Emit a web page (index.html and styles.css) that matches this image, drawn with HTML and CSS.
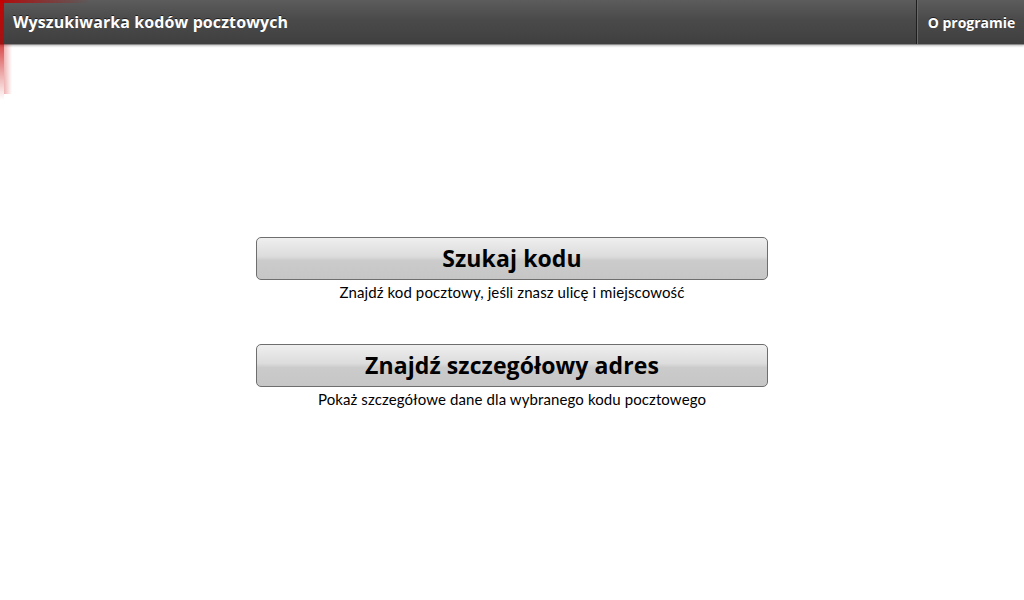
FILE: index.html
```html
<!DOCTYPE html>
<html lang="pl">
<head>
<meta charset="utf-8">
<title>Wyszukiwarka kodów pocztowych</title>
<link rel="stylesheet" href="styles.css">
</head>
<body>
<div class="app">
  <header class="topbar">
    <h1 class="title">Wyszukiwarka kodów pocztowych</h1>
    <button class="about">O programie</button>
  </header>
  <div class="corner-glow"></div>
  <main class="content">
    <div class="choice">
      <button class="big-btn">Szukaj kodu</button>
      <p class="hint">Znajdź kod pocztowy, jeśli znasz ulicę i miejscowość</p>
    </div>
    <div class="choice">
      <button class="big-btn">Znajdź szczegółowy adres</button>
      <p class="hint">Pokaż szczegółowe dane dla wybranego kodu pocztowego</p>
    </div>
  </main>
</div>
</body>
</html>
```
FILE: styles.css
```css
html, body {
  margin: 0;
  padding: 0;
  background: #ffffff;
}
.app {
  position: relative;
  width: 1024px;
  height: 600px;
  overflow: hidden;
  font-family: "Open Sans", "Liberation Sans", sans-serif;
}
.topbar {
  height: 44px;
  display: flex;
  align-items: stretch;
  justify-content: space-between;
  background: linear-gradient(to bottom, #5c5c5c 0%, #4a4a4a 45%, #3f3f3f 100%);
  border-bottom: 1px solid #8a8a8a;
  box-shadow: 0 1px 2px rgba(0,0,0,0.25);
}
.title {
  margin: 0;
  padding-left: 13px;
  display: flex;
  align-items: center;
  color: #ffffff;
  font-size: 16px;
  font-weight: 700;
  letter-spacing: 0.1px;
  text-shadow: 0 -1px 0 rgba(0,0,0,0.6);
}
.about {
  width: 108px;
  border: none;
  border-left: 1px solid #1e1e1e;
  box-shadow: inset 1px 0 0 #6a6a6a;
  background: transparent;
  color: #ffffff;
  font-family: inherit;
  font-size: 14px;
  font-weight: 700;
  padding: 0 0 0 2px;
  text-shadow: 0 -1px 0 rgba(0,0,0,0.6);
}
.corner-glow {
  position: absolute;
  left: 0;
  top: 0;
  width: 100px;
  height: 100px;
  pointer-events: none;
  background:
    linear-gradient(to bottom, rgba(200,0,0,0.95) 0%, rgba(200,0,0,0.7) 45%, rgba(220,30,30,0) 100%) left top / 4px 100px no-repeat,
    linear-gradient(to right, rgba(190,0,0,0.9) 0%, rgba(190,0,0,0.4) 50%, rgba(190,0,0,0) 100%) left top / 90px 3px no-repeat,
    linear-gradient(to right, rgba(210,40,40,0.35) 0%, rgba(210,40,40,0) 100%) 4px 44px / 8px 50px no-repeat;
}
.content {
  display: flex;
  flex-direction: column;
  align-items: center;
  padding-top: 192px;
  gap: 43px;
}
.choice {
  display: flex;
  flex-direction: column;
  align-items: center;
}
.big-btn {
  width: 512px;
  height: 43px;
  border: 1px solid #6e6e6e;
  border-radius: 5px;
  background: linear-gradient(to bottom, #efefef 0%, #dcdcdc 45%, #cbcbcb 55%, #c6c6c6 100%);
  color: #000000;
  font-family: "Open Sans", "Liberation Sans", sans-serif;
  font-size: 23px;
  font-weight: 700;
  padding: 0 0 2px;
  letter-spacing: 0.1px;
}
.hint {
  margin: 3px 0 0;
  font-family: Lato, "Liberation Sans", sans-serif;
  font-size: 15px;
  letter-spacing: 0.1px;
  color: #000000;
  line-height: 18px;
}
```
